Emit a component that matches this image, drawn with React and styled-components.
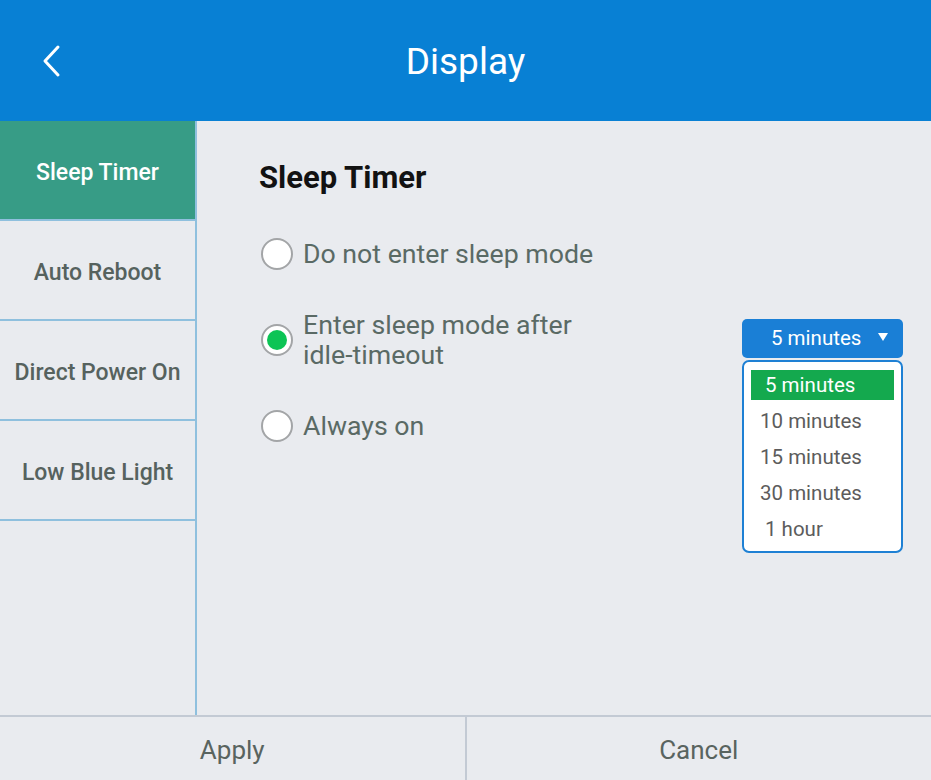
import React from "react";
import styled, { createGlobalStyle } from "styled-components";

const Global = createGlobalStyle`
  html, body { margin: 0; padding: 0; }
  body { font-family: Roboto, "Noto Sans", "Liberation Sans", sans-serif; background: #e9ebef; }
  * { box-sizing: border-box; }
`;

const Screen = styled.div`
  width: 931px;
  height: 780px;
  display: flex;
  flex-direction: column;
  background: #e9ebef;
  overflow: hidden;
`;

const Header = styled.header`
  height: 121px;
  flex: none;
  background: #0880d4;
  display: flex;
  align-items: center;
  justify-content: center;
  position: relative;
`;

const BackButton = styled.button`
  position: absolute;
  left: 36px;
  top: 40px;
  width: 32px;
  height: 42px;
  border: 0;
  padding: 0;
  background: transparent;
  display: flex;
  align-items: center;
  justify-content: center;
`;

const Title = styled.h1`
  margin: 0;
  color: #ffffff;
  font-size: 37px;
  font-weight: 400;
  line-height: 44px;
  padding-top: 2px;
`;

const Body = styled.div`
  flex: 1;
  display: flex;
  min-height: 0;
`;

const Sidebar = styled.nav`
  width: 197px;
  flex: none;
  border-right: 2px solid #8fc0de;
  display: flex;
  flex-direction: column;
`;

const MenuItem = styled.div`
  height: 100px;
  flex: none;
  display: flex;
  align-items: center;
  justify-content: center;
  border-bottom: 2px solid #8fc0de;
  background: ${(p) => (p.$active ? "#379c86" : "transparent")};
  color: ${(p) => (p.$active ? "#ffffff" : "#56625e")};
  font-size: 23px;
  font-weight: 500;
  padding-top: 4px;
`;

const Content = styled.main`
  flex: 1;
  padding: 39px 28px 0 64px;
  display: flex;
  flex-direction: column;
  gap: 40px;
`;

const SectionTitle = styled.h2`
  margin: 0 0 2px -2px;
  font-size: 31px;
  line-height: 36px;
  font-weight: 700;
  color: #121212;
`;

const OptionRow = styled.div`
  display: flex;
  align-items: center;
`;

const Radio = styled.span`
  width: 32px;
  height: 32px;
  flex: none;
  border-radius: 50%;
  border: 2px solid #a3a5a7;
  background: #ffffff;
  display: flex;
  align-items: center;
  justify-content: center;
  &::after {
    content: "";
    width: 20px;
    height: 20px;
    border-radius: 50%;
    background: ${(p) => (p.$checked ? "#0cc455" : "transparent")};
  }
`;

const Label = styled.span`
  margin-left: 10px;
  font-size: 26.7px;
  line-height: 30px;
  color: #5a6a65;
  max-width: ${(p) => (p.$narrow ? "300px" : "none")};
`;

const Dropdown = styled.div`
  margin-left: auto;
  position: relative;
  width: 161px;
  align-self: center;
  margin-top: -4px;
`;

const DropButton = styled.div`
  height: 39px;
  border-radius: 5px;
  background: #1a7fd6;
  color: #ffffff;
  font-size: 20.5px;
  display: flex;
  align-items: center;
  padding-left: 29px;
  gap: 17px;
`;

const Caret = styled.span`
  width: 0;
  height: 0;
  border-left: 5px solid transparent;
  border-right: 5px solid transparent;
  border-top: 8px solid #ffffff;
  margin-top: -2px;
`;

const List = styled.ul`
  position: absolute;
  left: 0;
  top: 41px;
  width: 161px;
  margin: 0;
  padding: 8px 7px 7px;
  list-style: none;
  background: #ffffff;
  border: 2px solid #1e80d4;
  border-radius: 7px;
  display: flex;
  flex-direction: column;
  gap: 6px;
`;

const ListItem = styled.li`
  height: 30px;
  display: flex;
  align-items: center;
  padding-left: ${(p) => p.$pad}px;
  font-size: 20.5px;
  color: ${(p) => (p.$selected ? "#ffffff" : "#5c5c5c")};
  background: ${(p) => (p.$selected ? "#14a94e" : "transparent")};
`;

const Footer = styled.footer`
  height: 65px;
  flex: none;
  border-top: 2px solid #c3cad4;
  display: flex;
`;

const FooterButton = styled.button`
  flex: 1;
  border: 0;
  background: #e9ebef;
  font-family: inherit;
  font-size: 26px;
  color: #59645f;
  display: flex;
  align-items: center;
  justify-content: center;
  padding: 2px 0 0;
  & + & {
    border-left: 2px solid #c3cad4;
  }
`;

const menu = ["Sleep Timer", "Auto Reboot", "Direct Power On", "Low Blue Light"];
const options = [
  { label: "10 minutes", pad: 9 },
  { label: "15 minutes", pad: 9 },
  { label: "30 minutes", pad: 9 },
  { label: "1 hour", pad: 14 },
];

export default function App() {
  return (
    <>
      <Global />
      <Screen>
        <Header>
          <BackButton aria-label="Back">
            <svg width="20" height="34" viewBox="0 0 20 34">
              <polyline
                points="16,3 3,17 16,31"
                fill="none"
                stroke="#ffffff"
                strokeWidth="3"
                strokeLinecap="round"
                strokeLinejoin="round"
              />
            </svg>
          </BackButton>
          <Title>Display</Title>
        </Header>
        <Body>
          <Sidebar>
            {menu.map((m, i) => (
              <MenuItem key={m} $active={i === 0}>
                {m}
              </MenuItem>
            ))}
          </Sidebar>
          <Content>
            <SectionTitle>Sleep Timer</SectionTitle>
            <OptionRow>
              <Radio />
              <Label>Do not enter sleep mode</Label>
            </OptionRow>
            <OptionRow>
              <Radio $checked />
              <Label $narrow>Enter sleep mode after idle-timeout</Label>
              <Dropdown>
                <DropButton>
                  <span>5 minutes</span>
                  <Caret />
                </DropButton>
                <List>
                  <ListItem $selected $pad={14}>5 minutes</ListItem>
                  {options.map((o) => (
                    <ListItem key={o.label} $pad={o.pad}>
                      {o.label}
                    </ListItem>
                  ))}
                </List>
              </Dropdown>
            </OptionRow>
            <OptionRow>
              <Radio />
              <Label>Always on</Label>
            </OptionRow>
          </Content>
        </Body>
        <Footer>
          <FooterButton>Apply</FooterButton>
          <FooterButton>Cancel</FooterButton>
        </Footer>
      </Screen>
    </>
  );
}
